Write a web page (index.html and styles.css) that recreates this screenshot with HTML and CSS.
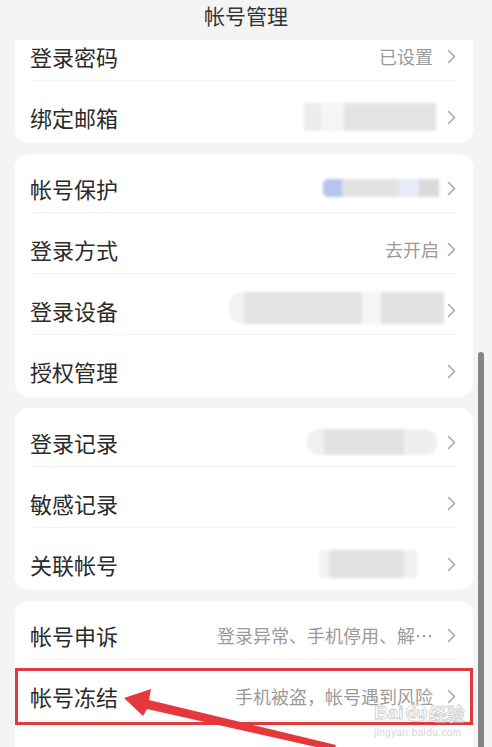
FILE: index.html
```html
<!DOCTYPE html>
<html>
<head>
<meta charset="utf-8" />
<title>帐号管理</title>
<link rel="stylesheet" href="styles.css">
</head>

<body>
<div class="screen">
  <header class="topbar">帐号管理</header>

  <div class="list">
    <!-- 被标题栏遮住一半的第一组 -->
    <section class="card card-cut">
      <div class="row row-cut">
        <span class="label">登录密码</span>
        <span class="value">已设置</span>
        <svg class="chev" viewBox="0 0 9 15"><polyline points="1.5,1.5 7.5,7.5 1.5,13.5" /></svg>
      </div>
      <div class="row">
        <span class="label">绑定邮箱</span>
        <span class="mask mask-mail"><i></i><i></i><i></i></span>
        <svg class="chev" viewBox="0 0 9 15"><polyline points="1.5,1.5 7.5,7.5 1.5,13.5" /></svg>
      </div>
    </section>

    <section class="card">
      <div class="row">
        <span class="label">帐号保护</span>
        <span class="mask mask-guard"><i></i><i></i><i></i><i></i></span>
        <svg class="chev" viewBox="0 0 9 15"><polyline points="1.5,1.5 7.5,7.5 1.5,13.5" /></svg>
      </div>
      <div class="row">
        <span class="label">登录方式</span>
        <span class="value value-near">去开启</span>
        <svg class="chev" viewBox="0 0 9 15"><polyline points="1.5,1.5 7.5,7.5 1.5,13.5" /></svg>
      </div>
      <div class="row">
        <span class="label">登录设备</span>
        <span class="mask mask-device"><i></i><i></i><i></i><i></i></span>
        <svg class="chev" viewBox="0 0 9 15"><polyline points="1.5,1.5 7.5,7.5 1.5,13.5" /></svg>
      </div>
      <div class="row">
        <span class="label">授权管理</span>
        <svg class="chev chev-alone" viewBox="0 0 9 15"><polyline points="1.5,1.5 7.5,7.5 1.5,13.5" /></svg>
      </div>
    </section>

    <section class="card">
      <div class="row">
        <span class="label">登录记录</span>
        <span class="mask mask-log"><i></i><i></i><i></i></span>
        <svg class="chev" viewBox="0 0 9 15"><polyline points="1.5,1.5 7.5,7.5 1.5,13.5" /></svg>
      </div>
      <div class="row">
        <span class="label">敏感记录</span>
        <svg class="chev chev-alone" viewBox="0 0 9 15"><polyline points="1.5,1.5 7.5,7.5 1.5,13.5" /></svg>
      </div>
      <div class="row">
        <span class="label">关联帐号</span>
        <span class="mask mask-link"><i></i><i></i><i></i></span>
        <svg class="chev" viewBox="0 0 9 15"><polyline points="1.5,1.5 7.5,7.5 1.5,13.5" /></svg>
      </div>
    </section>

    <section class="card">
      <div class="row">
        <span class="label">帐号申诉</span>
        <span class="value">登录异常、手机停用、解…</span>
        <svg class="chev" viewBox="0 0 9 15"><polyline points="1.5,1.5 7.5,7.5 1.5,13.5" /></svg>
      </div>
      <div class="row row-mark">
        <span class="label">帐号冻结</span>
        <span class="value">手机被盗，帐号遇到风险</span>
        <svg class="chev" viewBox="0 0 9 15"><polyline points="1.5,1.5 7.5,7.5 1.5,13.5" /></svg>
      </div>
      <div class="row">
        <span class="label">帐号注销</span>
        <svg class="chev chev-alone" viewBox="0 0 9 15"><polyline points="1.5,1.5 7.5,7.5 1.5,13.5" /></svg>
      </div>
    </section>
  </div>

  <div class="scrollbar"></div>

  <!-- 标注箭头 -->
  <svg class="pointer" viewBox="0 0 492 747">
    <polygon points="124,698 151,689 149,700 336,745 334,751 147,709 143,716" />
  </svg>

  <div class="watermark">
    <div class="wm-logo">Bai<span class="wm-paw">du</span><span class="wm-cn">经验</span></div>
    <div class="wm-url">jingyan.baidu.com</div>
  </div>
</div>
</body>
</html>
```

FILE: styles.css
```css
/* 帐号管理 */
html, body {margin: 0; padding: 0;}
body {background: #f4f4f4; font-family: "Noto Sans CJK SC", "Noto Sans", sans-serif; color: #2a2a2a;}
.screen {position: relative; width: 492px; height: 747px; overflow: hidden;}

.topbar {display: flex; justify-content: center; height: 40px; box-sizing: border-box; font-size: 21px; line-height: 30px; color: #333; background: #f4f4f4;}

.list {display: flex; flex-direction: column; gap: 11px; padding: 0 19px 0 15px;}
.card {background: #fff; border-radius: 14px; padding-top: 3px;}
.card-cut {padding-top: 0; border-radius: 3px 3px 14px 14px;}

.row {display: flex; align-items: center; margin: 0 15px 5px; padding: 17px 0 10px; line-height: 28px; border-bottom: 1px solid #f1f1f1;}
.row:last-child {margin-bottom: 0; padding-bottom: 12px; border-bottom: 0;}
.row-cut {padding-top: 2px;}
.label {font-size: 22px; color: #2a2a2a; white-space: nowrap;}
.value {margin-left: auto; margin-right: 14px; font-size: 18px; color: #9a9a9a; white-space: nowrap;}
.value-near {margin-right: 8px;}

.chev {width: 9px; height: 15px; margin-right: 2px; flex: none;}
.chev polyline {fill: none; stroke: #a9a9a9; stroke-width: 1.6; stroke-linecap: round; stroke-linejoin: round;}
.chev-alone {margin-left: auto;}

/* 打码区域 */
.mask {display: flex; margin-left: auto; filter: blur(1.5px);}
.mask i {display: block; height: 100%;}
.mask-mail {height: 28px; margin-right: 11px;}
.mask-mail i:nth-child(1) {width: 17px; background: #ececec;}
.mask-mail i:nth-child(2) {width: 23px; background: #f5f5f5;}
.mask-mail i:nth-child(3) {width: 92px; background: #e3e3e3;}
.mask-guard {height: 18px; margin-right: 8px;}
.mask-guard i:nth-child(1) {width: 19px; background: #b7c3f1; border-radius: 5px 0 0 5px;}
.mask-guard i:nth-child(2) {width: 57px; background: #e2e2e2;}
.mask-guard i:nth-child(3) {width: 20px; background: #e7ebfa;}
.mask-guard i:nth-child(4) {width: 20px; background: #dadada;}
.mask-device {height: 32px; margin-right: 3px; margin-top: -4px;}
.mask-device i:nth-child(1) {width: 15px; background: #f2f2f2; border-radius: 14px 0 0 14px;}
.mask-device i:nth-child(2) {width: 118px; background: #e3e3e3;}
.mask-device i:nth-child(3) {width: 19px; background: #f6f6f6;}
.mask-device i:nth-child(4) {width: 63px; background: #e1e1e1;}
.mask-log {height: 26px; margin-right: 10px;}
.mask-log i:nth-child(1) {width: 17px; background: #f0f0f0; border-radius: 12px 0 0 12px;}
.mask-log i:nth-child(2) {width: 80px; background: #e2e2e2;}
.mask-log i:nth-child(3) {width: 33px; background: #efefef; border-radius: 0 12px 12px 0;}
.mask-link {height: 28px; margin-right: 30px;}
.mask-link i:nth-child(1) {width: 10px; background: #f4f4f4;}
.mask-link i:nth-child(2) {width: 75px; background: #e1e1e1;}
.mask-link i:nth-child(3) {width: 13px; background: #efefef;}

/* 红框标注 */
.row-mark {position: relative;}
.row-mark::before {content: ""; position: absolute; left: -15px; right: -15px; top: 3px; height: 57px; border: 3px solid #e0393e; box-sizing: border-box;}

.scrollbar {position: absolute; left: 478px; top: 352px; width: 6px; height: 420px; background: #858585; border-radius: 3px;}

.pointer {position: absolute; left: 0; top: 0; width: 492px; height: 747px; pointer-events: none;}
.pointer polygon {fill: #e5383d;}

.watermark {position: absolute; left: 374px; top: 702px; font-family: "Liberation Sans", sans-serif; pointer-events: none;}
.wm-logo {display: flex; align-items: center; font-size: 19px; font-weight: bold; line-height: 22px; color: rgba(255,255,255,0.6); -webkit-text-stroke: 0.8px #cdcdcd;}
.wm-paw {margin: 0 2px; padding: 0 1px; font-size: 14px; border: 1px solid #d3d3d3; border-radius: 8px; line-height: 16px;}
.wm-cn {font-family: "Noto Sans CJK SC", sans-serif; font-size: 18px;}
.wm-url {font-size: 10px; line-height: 12px; margin-top: 3px; color: #d4d4d4; letter-spacing: 0.4px;}
```
